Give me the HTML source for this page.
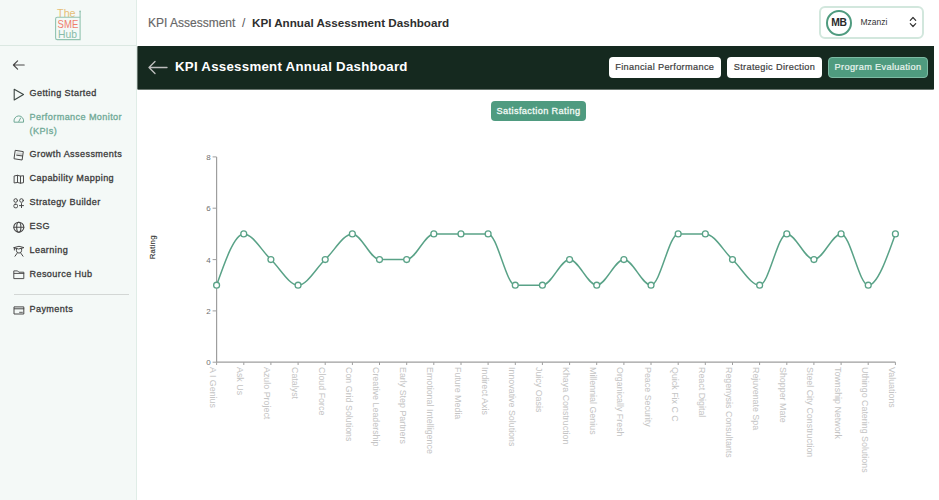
<!DOCTYPE html>
<html><head><meta charset="utf-8">
<style>
*{box-sizing:border-box;margin:0;padding:0}
html,body{width:939px;height:500px;overflow:hidden;background:#fff;font-family:"Liberation Sans",sans-serif}
.abs{position:absolute}
#side{position:absolute;left:0;top:0;width:137px;height:500px;background:#f4f9f7;border-right:1px solid #e0ede7}
#logo{position:absolute;left:0;top:0;width:136px;height:46px;border-bottom:1px solid #dbe8e2}
.nav{position:absolute;left:29.5px;font-size:9.1px;letter-spacing:0.4px;font-weight:normal;-webkit-text-stroke:0.3px currentColor;color:#3b3b3b;white-space:nowrap;line-height:14px}
.nav.act{color:#6fa996}
.ico{position:absolute;left:12px}
#top{position:absolute;left:138px;top:0;width:801px;height:46px;background:#fff}
.bc{position:absolute;top:16px;font-size:12px;line-height:14px;white-space:nowrap}
#user{position:absolute;left:819px;top:6px;width:105px;height:33px;border:2px solid #d2e7dd;border-radius:6px;background:#fff}
#bar{position:absolute;left:138px;top:46px;width:796px;height:43px;background:#15291f;box-shadow:0 1px 0 rgba(21,41,31,.5),-1px 0 0 rgba(21,41,31,.5),-1px 1px 0 rgba(21,41,31,.3)}
.btn{position:absolute;top:57px;height:21px;border-radius:4px;background:#fff;color:#3c3c3c;font-size:9.2px;letter-spacing:0.34px;line-height:20px;-webkit-text-stroke:0.2px currentColor;text-align:center;white-space:nowrap}
.btn.g{background:#4f9b7f;color:#eaf5f0;border:1px solid #7dbba4;line-height:18px}
#sat{position:absolute;left:491px;top:101px;width:95px;height:20px;border-radius:4px;background:#4f9b80;color:#f2faf6;font-size:9.2px;letter-spacing:0.38px;-webkit-text-stroke:0.3px currentColor;line-height:20px;text-align:center}
svg text{font-family:"Liberation Sans",sans-serif}
.yt{font-size:8px;fill:#6f6f6f}
.xt{font-size:8.9px;fill:#c4c4c4}
.yl{font-size:7.8px;letter-spacing:0.25px;fill:#333;stroke:#333;stroke-width:0.15px}
</style></head><body>
<div id="side">
  <div id="logo">
    <svg class="abs" style="left:0;top:0" width="137" height="45">
      <text x="57.1" y="16.6" font-size="11.4" textLength="18.5" lengthAdjust="spacingAndGlyphs" fill="#e6be76">The</text>
      <path d="M57.3,17.2 H80.1 V39.6 H57.3 Q55.6,39.6 55.6,37.9 V18.9 Q55.6,17.2 57.3,17.2" fill="none" stroke="#92c3b0" stroke-width="1.1"/>
      <path d="M80.1,17.2 V11.6" stroke="#92c3b0" stroke-width="1.1"/>
      <circle cx="80.1" cy="11.3" r="0.9" fill="#92c3b0"/>
      <text x="57.6" y="27.5" font-size="11" textLength="20.7" lengthAdjust="spacingAndGlyphs" fill="#ef7d6d">SME</text>
      <text x="58" y="37.8" font-size="11" textLength="19" lengthAdjust="spacingAndGlyphs" fill="#88bba8">Hub</text>
    </svg>
  </div>
  <svg class="abs" style="left:0;top:0" width="137" height="330" fill="none" stroke="#484848" stroke-width="1" stroke-linejoin="round" stroke-linecap="round">
    <path d="M13.4,65 H24.2 M17.6,60.8 L13.4,65 L17.6,69.2" stroke-width="1.15"/>
    <path d="M14.2,89.2 L23.5,94.6 L14.2,100 Z" stroke-width="1.1" stroke="#3d4743"/>
    <path d="M14,121.8 A4.9,4.9 0 1 1 23.6,121.8 Z M18.8,121.5 L20.6,118" stroke="#6fa996"/>
    <path d="M16.6,152.2 L22.4,153 L22,155.8 L16.2,155 Z" fill="#d4d6d5" stroke="none"/><path d="M15.6,150.4 L23.3,151.6 L22.1,160 L14.4,158.8 Z M16.7,155.2 L22.6,156" />
    <path d="M14.5,175.9 L17.5,175.3 L20.5,176.1 L23.5,175.7 V182.7 L20.5,183.2 L17.5,182.5 L14.5,182.9 Z M17.5,175.3 V182.5 M20.5,176.1 V183.2" stroke="#4d4d4d"/>
    <circle cx="15.7" cy="200.5" r="1.8"/><circle cx="21.5" cy="200.5" r="1.8"/><rect x="13.9" y="204.2" width="3.6" height="3.6" rx="1.3"/><path d="M21.5,203.6 V207.6 M19.5,205.6 H23.5"/>
    <circle cx="18.8" cy="227.2" r="5" stroke-width="1.1"/><ellipse cx="18.8" cy="227.2" rx="2.1" ry="5" stroke-width="1.1"/><path d="M13.8,227.2 H23.8" stroke-width="1.1"/>
    <path d="M14,247.6 L19,246.3 L24,247.6 L19,248.9 Z M14.4,247.8 V250 M16.4,248.5 V250.5 A2.6,2.6 0 0 0 21.6,250.5 V248.5 M15,256.2 L17,253.4 M23,256.2 L21,253.4"/>
    <path d="M14.2,270.9 H17.6 L18.8,272.2 H23.8 V278.6 H14.2 Z M14.2,273.4 H23.8" stroke-width="0.95"/>
    <path d="M14.4,306.9 H23.8 V314 H14.4 Z M14.4,308.8 H23.8" /><path d="M19.6,312.3 H22.4" stroke-width="0.9"/>
  </svg>
  <div class="nav" style="top:86.4px">Getting Started</div>
  <div class="nav act" style="top:110.2px">Performance Monitor<br>(KPIs)</div>
  <div class="nav" style="top:146.5px">Growth Assessments</div>
  <div class="nav" style="top:170.5px">Capability Mapping</div>
  <div class="nav" style="top:194.5px">Strategy Builder</div>
  <div class="nav" style="top:218.5px">ESG</div>
  <div class="nav" style="top:242.5px">Learning</div>
  <div class="nav" style="top:266.5px">Resource Hub</div>
  <div class="abs" style="left:13.5px;top:294px;width:115px;height:1px;background:#d3d7d5"></div>
  <div class="nav" style="top:302px">Payments</div>
</div>

<div id="top">
  <div class="bc" style="left:10px;color:#666;-webkit-text-stroke:0.15px currentColor">KPI Assessment</div>
  <div class="bc" style="left:104px;color:#555">/</div>
  <div class="bc" style="left:114px;color:#2e2e2e;font-weight:bold;font-size:11.65px">KPI Annual Assessment Dashboard</div>
</div>
<div id="user">
  <div class="abs" style="left:4.5px;top:1.5px;width:26px;height:26px;border:2px solid #4f9b7f;border-radius:50%"></div>
  <div class="abs" style="left:5px;top:8.8px;width:26px;text-align:center;font-size:10.3px;letter-spacing:-0.3px;font-weight:bold;color:#2a2a2a;line-height:12px">MB</div>
  <div class="abs" style="left:39.5px;top:9px;font-size:8.5px;color:#333;line-height:11px">Mzanzi</div>
  <svg class="abs" style="left:87px;top:8px" width="10" height="13"><path d="M2.3,4.3 L5,1.5 L7.7,4.3 M2.3,7.7 L5,10.5 L7.7,7.7" fill="none" stroke="#333" stroke-width="1.2" stroke-linecap="round" stroke-linejoin="round"/></svg>
</div>

<div id="bar">
  <svg class="abs" style="left:8.5px;top:13.5px" width="22" height="16"><path d="M2,7.5 H20 M8,1.5 L2,7.5 L8,13.5" fill="none" stroke="#bdbdbd" stroke-width="1.35" stroke-linecap="round" stroke-linejoin="round"/></svg>
  <div class="abs" style="left:37px;top:13.2px;font-size:13.25px;letter-spacing:0.27px;font-weight:bold;color:#fff;line-height:16px;white-space:nowrap">KPI Assessment Annual Dashboard</div>
</div>
<div class="btn" style="left:608.5px;width:112.5px">Financial Performance</div>
<div class="btn" style="left:727px;width:95px">Strategic Direction</div>
<div class="btn g" style="left:828px;width:100px">Program Evaluation</div>

<div id="sat">Satisfaction Rating</div>

<svg class="abs" style="left:0;top:0" width="939" height="500">
<line x1="216.6" y1="156.9" x2="216.6" y2="362.2" stroke="#9e9e9e" stroke-width="1.2"/>
<line x1="216.6" y1="362.2" x2="895.4" y2="362.2" stroke="#9e9e9e" stroke-width="1.2"/>
<line x1="212.6" y1="362.2" x2="216.6" y2="362.2" stroke="#9e9e9e"/>
<text x="210.6" y="365.1" text-anchor="end" class="yt">0</text>
<line x1="212.6" y1="310.9" x2="216.6" y2="310.9" stroke="#9e9e9e"/>
<text x="210.6" y="313.8" text-anchor="end" class="yt">2</text>
<line x1="212.6" y1="259.6" x2="216.6" y2="259.6" stroke="#9e9e9e"/>
<text x="210.6" y="262.5" text-anchor="end" class="yt">4</text>
<line x1="212.6" y1="208.2" x2="216.6" y2="208.2" stroke="#9e9e9e"/>
<text x="210.6" y="211.1" text-anchor="end" class="yt">6</text>
<line x1="212.6" y1="156.9" x2="216.6" y2="156.9" stroke="#9e9e9e"/>
<text x="210.6" y="159.8" text-anchor="end" class="yt">8</text>
<line x1="216.6" y1="362.2" x2="216.6" y2="365.0" stroke="#9e9e9e"/>
<text transform="translate(216.6,367.0) rotate(90)" y="6.5" class="xt">A I Genius</text>
<line x1="243.8" y1="362.2" x2="243.8" y2="365.0" stroke="#9e9e9e"/>
<text transform="translate(243.8,367.0) rotate(90)" y="6.5" class="xt">Ask Us</text>
<line x1="270.9" y1="362.2" x2="270.9" y2="365.0" stroke="#9e9e9e"/>
<text transform="translate(270.9,367.0) rotate(90)" y="6.5" class="xt">Azulo Project</text>
<line x1="298.1" y1="362.2" x2="298.1" y2="365.0" stroke="#9e9e9e"/>
<text transform="translate(298.1,367.0) rotate(90)" y="6.5" class="xt">Catalyst</text>
<line x1="325.2" y1="362.2" x2="325.2" y2="365.0" stroke="#9e9e9e"/>
<text transform="translate(325.2,367.0) rotate(90)" y="6.5" class="xt">Cloud Force</text>
<line x1="352.4" y1="362.2" x2="352.4" y2="365.0" stroke="#9e9e9e"/>
<text transform="translate(352.4,367.0) rotate(90)" y="6.5" class="xt">Con Grid Solutions</text>
<line x1="379.5" y1="362.2" x2="379.5" y2="365.0" stroke="#9e9e9e"/>
<text transform="translate(379.5,367.0) rotate(90)" y="6.5" class="xt">Creative Leadership</text>
<line x1="406.7" y1="362.2" x2="406.7" y2="365.0" stroke="#9e9e9e"/>
<text transform="translate(406.7,367.0) rotate(90)" y="6.5" class="xt">Early Step Partners</text>
<line x1="433.8" y1="362.2" x2="433.8" y2="365.0" stroke="#9e9e9e"/>
<text transform="translate(433.8,367.0) rotate(90)" y="6.5" class="xt">Emotional Intelligence</text>
<line x1="461.0" y1="362.2" x2="461.0" y2="365.0" stroke="#9e9e9e"/>
<text transform="translate(461.0,367.0) rotate(90)" y="6.5" class="xt">Future Media</text>
<line x1="488.1" y1="362.2" x2="488.1" y2="365.0" stroke="#9e9e9e"/>
<text transform="translate(488.1,367.0) rotate(90)" y="6.5" class="xt">Indirect Axis</text>
<line x1="515.3" y1="362.2" x2="515.3" y2="365.0" stroke="#9e9e9e"/>
<text transform="translate(515.3,367.0) rotate(90)" y="6.5" class="xt">Innovative Solutions</text>
<line x1="542.4" y1="362.2" x2="542.4" y2="365.0" stroke="#9e9e9e"/>
<text transform="translate(542.4,367.0) rotate(90)" y="6.5" class="xt">Juicy Oasis</text>
<line x1="569.6" y1="362.2" x2="569.6" y2="365.0" stroke="#9e9e9e"/>
<text transform="translate(569.6,367.0) rotate(90)" y="6.5" class="xt">Khaya Construction</text>
<line x1="596.7" y1="362.2" x2="596.7" y2="365.0" stroke="#9e9e9e"/>
<text transform="translate(596.7,367.0) rotate(90)" y="6.5" class="xt">Millennial Genius</text>
<line x1="623.9" y1="362.2" x2="623.9" y2="365.0" stroke="#9e9e9e"/>
<text transform="translate(623.9,367.0) rotate(90)" y="6.5" class="xt">Organically Fresh</text>
<line x1="651.0" y1="362.2" x2="651.0" y2="365.0" stroke="#9e9e9e"/>
<text transform="translate(651.0,367.0) rotate(90)" y="6.5" class="xt">Peace Security</text>
<line x1="678.2" y1="362.2" x2="678.2" y2="365.0" stroke="#9e9e9e"/>
<text transform="translate(678.2,367.0) rotate(90)" y="6.5" class="xt">Quick Fix C C</text>
<line x1="705.3" y1="362.2" x2="705.3" y2="365.0" stroke="#9e9e9e"/>
<text transform="translate(705.3,367.0) rotate(90)" y="6.5" class="xt">React Digital</text>
<line x1="732.5" y1="362.2" x2="732.5" y2="365.0" stroke="#9e9e9e"/>
<text transform="translate(732.5,367.0) rotate(90)" y="6.5" class="xt">Regenysis Consultants</text>
<line x1="759.6" y1="362.2" x2="759.6" y2="365.0" stroke="#9e9e9e"/>
<text transform="translate(759.6,367.0) rotate(90)" y="6.5" class="xt">Rejuvenate Spa</text>
<line x1="786.8" y1="362.2" x2="786.8" y2="365.0" stroke="#9e9e9e"/>
<text transform="translate(786.8,367.0) rotate(90)" y="6.5" class="xt">Shopper Mate</text>
<line x1="813.9" y1="362.2" x2="813.9" y2="365.0" stroke="#9e9e9e"/>
<text transform="translate(813.9,367.0) rotate(90)" y="6.5" class="xt">Steel City Construction</text>
<line x1="841.1" y1="362.2" x2="841.1" y2="365.0" stroke="#9e9e9e"/>
<text transform="translate(841.1,367.0) rotate(90)" y="6.5" class="xt">Township Network</text>
<line x1="868.2" y1="362.2" x2="868.2" y2="365.0" stroke="#9e9e9e"/>
<text transform="translate(868.2,367.0) rotate(90)" y="6.5" class="xt">Uthingo Catering Solutions</text>
<line x1="895.4" y1="362.2" x2="895.4" y2="365.0" stroke="#9e9e9e"/>
<text transform="translate(895.4,367.0) rotate(90)" y="6.5" class="xt">Valuations</text>
<path d="M216.60,285.22C225.65,259.56,234.70,233.90,243.75,233.90C252.80,233.90,261.85,251.01,270.90,259.56C279.95,268.11,289.01,285.22,298.06,285.22C307.11,285.22,316.16,268.11,325.21,259.56C334.26,251.01,343.31,233.90,352.36,233.90C361.41,233.90,370.46,259.56,379.51,259.56C388.56,259.56,397.61,259.56,406.66,259.56C415.71,259.56,424.77,233.90,433.82,233.90C442.87,233.90,451.92,233.90,460.97,233.90C470.02,233.90,479.07,233.90,488.12,233.90C497.17,233.90,506.22,285.22,515.27,285.22C524.32,285.22,533.37,285.22,542.42,285.22C551.47,285.22,560.53,259.56,569.58,259.56C578.63,259.56,587.68,285.22,596.73,285.22C605.78,285.22,614.83,259.56,623.88,259.56C632.93,259.56,641.98,285.22,651.03,285.22C660.08,285.22,669.13,233.90,678.18,233.90C687.23,233.90,696.29,233.90,705.34,233.90C714.39,233.90,723.44,251.01,732.49,259.56C741.54,268.11,750.59,285.22,759.64,285.22C768.69,285.22,777.74,233.90,786.79,233.90C795.84,233.90,804.89,259.56,813.94,259.56C822.99,259.56,832.05,233.90,841.10,233.90C850.15,233.90,859.20,285.22,868.25,285.22C877.30,285.22,886.35,259.56,895.40,233.90" fill="none" stroke="#59a287" stroke-width="1.5"/>
<circle cx="216.60" cy="285.22" r="2.95" fill="#fff" stroke="#59a287" stroke-width="1.3"/>
<circle cx="243.75" cy="233.90" r="2.95" fill="#fff" stroke="#59a287" stroke-width="1.3"/>
<circle cx="270.90" cy="259.56" r="2.95" fill="#fff" stroke="#59a287" stroke-width="1.3"/>
<circle cx="298.06" cy="285.22" r="2.95" fill="#fff" stroke="#59a287" stroke-width="1.3"/>
<circle cx="325.21" cy="259.56" r="2.95" fill="#fff" stroke="#59a287" stroke-width="1.3"/>
<circle cx="352.36" cy="233.90" r="2.95" fill="#fff" stroke="#59a287" stroke-width="1.3"/>
<circle cx="379.51" cy="259.56" r="2.95" fill="#fff" stroke="#59a287" stroke-width="1.3"/>
<circle cx="406.66" cy="259.56" r="2.95" fill="#fff" stroke="#59a287" stroke-width="1.3"/>
<circle cx="433.82" cy="233.90" r="2.95" fill="#fff" stroke="#59a287" stroke-width="1.3"/>
<circle cx="460.97" cy="233.90" r="2.95" fill="#fff" stroke="#59a287" stroke-width="1.3"/>
<circle cx="488.12" cy="233.90" r="2.95" fill="#fff" stroke="#59a287" stroke-width="1.3"/>
<circle cx="515.27" cy="285.22" r="2.95" fill="#fff" stroke="#59a287" stroke-width="1.3"/>
<circle cx="542.42" cy="285.22" r="2.95" fill="#fff" stroke="#59a287" stroke-width="1.3"/>
<circle cx="569.58" cy="259.56" r="2.95" fill="#fff" stroke="#59a287" stroke-width="1.3"/>
<circle cx="596.73" cy="285.22" r="2.95" fill="#fff" stroke="#59a287" stroke-width="1.3"/>
<circle cx="623.88" cy="259.56" r="2.95" fill="#fff" stroke="#59a287" stroke-width="1.3"/>
<circle cx="651.03" cy="285.22" r="2.95" fill="#fff" stroke="#59a287" stroke-width="1.3"/>
<circle cx="678.18" cy="233.90" r="2.95" fill="#fff" stroke="#59a287" stroke-width="1.3"/>
<circle cx="705.34" cy="233.90" r="2.95" fill="#fff" stroke="#59a287" stroke-width="1.3"/>
<circle cx="732.49" cy="259.56" r="2.95" fill="#fff" stroke="#59a287" stroke-width="1.3"/>
<circle cx="759.64" cy="285.22" r="2.95" fill="#fff" stroke="#59a287" stroke-width="1.3"/>
<circle cx="786.79" cy="233.90" r="2.95" fill="#fff" stroke="#59a287" stroke-width="1.3"/>
<circle cx="813.94" cy="259.56" r="2.95" fill="#fff" stroke="#59a287" stroke-width="1.3"/>
<circle cx="841.10" cy="233.90" r="2.95" fill="#fff" stroke="#59a287" stroke-width="1.3"/>
<circle cx="868.25" cy="285.22" r="2.95" fill="#fff" stroke="#59a287" stroke-width="1.3"/>
<circle cx="895.40" cy="233.90" r="2.95" fill="#fff" stroke="#59a287" stroke-width="1.3"/>
<text transform="translate(154.6,247.3) rotate(-90)" text-anchor="middle" class="yl">Rating</text>
</svg>
</body></html>
